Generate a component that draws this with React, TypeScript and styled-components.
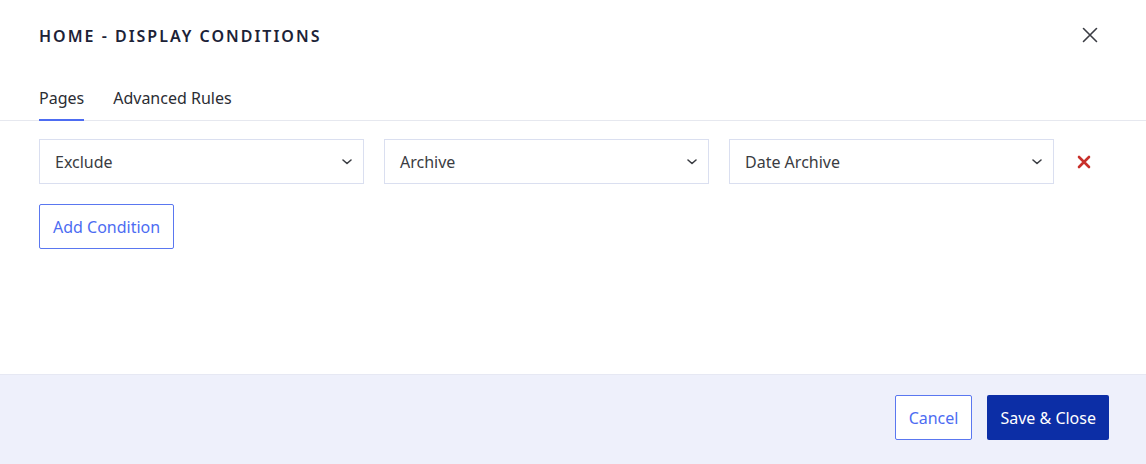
import React from 'react'
import styled, { createGlobalStyle } from 'styled-components'

const GlobalStyle = createGlobalStyle`
  html, body {
    margin: 0;
    padding: 0;
    background: #ffffff;
  }
  body {
    font-family: 'Noto Sans', 'Open Sans', sans-serif;
  }
  * { box-sizing: border-box; }
`

const Modal = styled.div`
  width: 1146px;
  height: 464px;
  display: flex;
  flex-direction: column;
  background: #fff;
`

const Header = styled.div`
  display: flex;
  align-items: flex-start;
  justify-content: space-between;
  padding: 25px 46px 0 39px;
  height: 70px;
`

const Title = styled.h2`
  margin: 0;
  font-size: 16px;
  line-height: 22px;
  font-weight: 600;
  letter-spacing: 2px;
  color: #1c2237;
`

const CloseButton = styled.button`
  border: 0;
  background: none;
  padding: 0;
  width: 20px;
  height: 20px;
  display: flex;
  align-items: center;
  justify-content: center;
  cursor: pointer;
`

const Tabs = styled.div`
  display: flex;
  gap: 29px;
  padding: 0 39px;
  border-bottom: 1px solid #e6e8ef;
`

const Tab = styled.div<{ $active?: boolean }>`
  font-size: 16px;
  line-height: 22px;
  color: #2b2d33;
  padding: 17px 0 10px;
  border-bottom: 2px solid ${p => (p.$active ? '#4d6cf2' : 'transparent')};
  margin-bottom: -1px;
`

const Body = styled.div`
  padding: 18px 39px 0;
  display: flex;
  flex-direction: column;
  gap: 20px;
  align-items: flex-start;
`

const Row = styled.div`
  display: flex;
  align-items: center;
  gap: 20px;
`

const Select = styled.div`
  width: 325px;
  height: 45px;
  border: 1px solid #dadff0;
  display: flex;
  align-items: center;
  justify-content: space-between;
  padding: 0 10px 0 15px;
  font-size: 16px;
  color: #3a3c42;
`

const RemoveButton = styled.button`
  border: 0;
  background: none;
  padding: 0;
  margin-left: 2px;
  width: 16px;
  height: 16px;
  display: flex;
  align-items: center;
  justify-content: center;
`

const OutlineButton = styled.button`
  height: 45px;
  padding: 0 13px;
  border: 1px solid #5a77f0;
  border-radius: 2px;
  background: #fff;
  color: #4d6cf2;
  font-family: inherit;
  font-size: 16px;
`

const Footer = styled.div`
  margin-top: auto;
  height: 90px;
  background: #eef0fb;
  border-top: 1px solid #e6e8f3;
  display: flex;
  align-items: flex-start;
  justify-content: flex-end;
  gap: 15px;
  padding: 20px 37px 0;
`

const PrimaryButton = styled.button`
  height: 45px;
  padding: 0 13px;
  border: 0;
  border-radius: 2px;
  background: #0c2ea6;
  color: #fff;
  font-family: inherit;
  font-size: 16px;
`

const Chevron = () => (
  <svg width="12" height="8" viewBox="0 0 12 8">
    <polyline points="2,2 6,5.5 10,2" fill="none" stroke="#3a3c42" strokeWidth="1.6" strokeLinecap="round" strokeLinejoin="round" />
  </svg>
)

const selects = ['Exclude', 'Archive', 'Date Archive']

export default function App() {
  return (
    <Modal>
      <GlobalStyle />
      <Header>
        <Title>HOME - DISPLAY CONDITIONS</Title>
        <CloseButton aria-label="Close">
          <svg width="16" height="16" viewBox="0 0 16 16">
            <path d="M1.5 1.5 L14.5 14.5 M14.5 1.5 L1.5 14.5" stroke="#3b3d44" strokeWidth="1.6" strokeLinecap="round" />
          </svg>
        </CloseButton>
      </Header>
      <Tabs>
        <Tab $active>Pages</Tab>
        <Tab>Advanced Rules</Tab>
      </Tabs>
      <Body>
        <Row>
          {selects.map(s => (
            <Select key={s}>
              <span>{s}</span>
              <Chevron />
            </Select>
          ))}
          <RemoveButton aria-label="Remove">
            <svg width="14" height="14" viewBox="0 0 14 14">
              <path d="M2 2 L12 12 M12 2 L2 12" stroke="#c8302b" strokeWidth="2.6" strokeLinecap="round" />
            </svg>
          </RemoveButton>
        </Row>
        <OutlineButton>Add Condition</OutlineButton>
      </Body>
      <Footer>
        <OutlineButton>Cancel</OutlineButton>
        <PrimaryButton>Save &amp; Close</PrimaryButton>
      </Footer>
    </Modal>
  )
}
